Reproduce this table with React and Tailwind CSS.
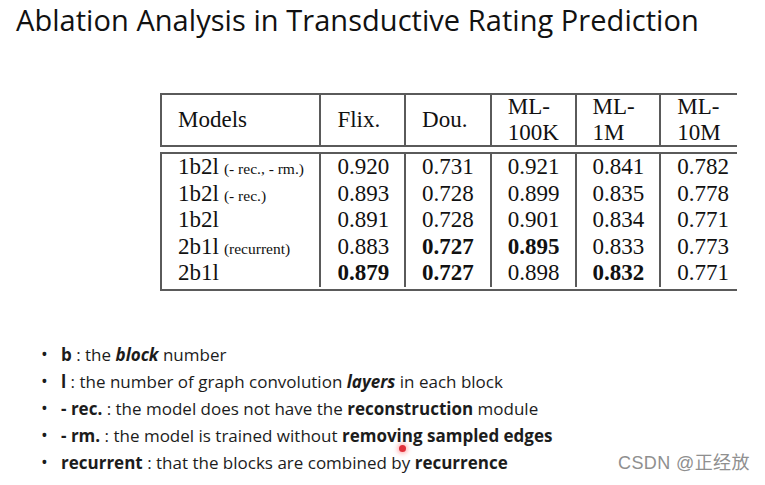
import React from 'react';

const cols = ['w-[160px]', 'w-[85px]', 'w-[86px]', 'w-[85px]', 'w-[85px]', 'w-[76px]'];

const rows = [
  { model: '1b2l', note: '(- rec., - rm.)', vals: ['0.920', '0.731', '0.921', '0.841', '0.782'], bold: [] },
  { model: '1b2l', note: '(- rec.)', vals: ['0.893', '0.728', '0.899', '0.835', '0.778'], bold: [] },
  { model: '1b2l', note: '', vals: ['0.891', '0.728', '0.901', '0.834', '0.771'], bold: [] },
  { model: '2b1l', note: '(recurrent)', vals: ['0.883', '0.727', '0.895', '0.833', '0.773'], bold: [1, 2] },
  { model: '2b1l', note: '', vals: ['0.879', '0.727', '0.898', '0.832', '0.771'], bold: [0, 1, 3] },
];

const headers = [['Models'], ['Flix.'], ['Dou.'], ['ML-', '100K'], ['ML-', '1M'], ['ML-', '10M']];

const Cell = ({ i, children, className = '' }) => (
  <div className={`${cols[i]} ${i < 5 ? 'border-r-2 border-[#5a5a5a]' : ''} pl-[16px] ${className}`}>
    {children}
  </div>
);

const bullets = [
  [<b key="a">b</b>, ' : the ', <b key="b"><i>block</i></b>, ' number'],
  [<b key="a">l</b>, ' : the number of graph convolution ', <b key="b"><i>layers</i></b>, ' in each block'],
  [<b key="a">- rec.</b>, ' : the model does not have the ', <b key="b">reconstruction</b>, ' module'],
  [<b key="a">- rm.</b>, ' : the model is trained without ', <b key="b">removing sampled edges</b>],
  [<b key="a">recurrent</b>, ' : that the blocks are combined by ', <b key="b">recurrence</b>],
];

export default function App() {
  return (
    <div className="relative w-[765px] h-[485px] bg-white overflow-hidden text-[#1a1a1a]">
      <h1 className="pl-[16px] text-[29px] leading-[40px] tracking-[0.05px] font-['Open_Sans',sans-serif] text-[#111]">
        Ablation Analysis in Transductive Rating Prediction
      </h1>

      <div className="ml-[160px] mt-[53px] w-[577px] font-['Liberation_Serif',serif] text-[23px] text-[#111]">
        <div className="flex h-[54px] border-t-2 border-b-2 border-l-2 border-[#5a5a5a]">
          {headers.map((h, i) => (
            <Cell key={i} i={i} className="flex flex-col justify-center leading-[26px]">
              {h.map((t) => (
                <span key={t}>{t}</span>
              ))}
            </Cell>
          ))}
        </div>
        <div className="mt-[5px] border-t-2 border-b-2 border-l-2 border-[#5a5a5a] pb-[2px]">
          {rows.map((r, ri) => (
            <div key={ri} className="flex h-[26.6px] leading-[26.6px]">
              <Cell i={0} className="whitespace-nowrap">
                {r.model}
                {r.note && <span className="text-[15.5px] ml-[5px]">{r.note}</span>}
              </Cell>
              {r.vals.map((v, vi) => (
                <Cell key={vi} i={vi + 1} className={r.bold.includes(vi) ? 'font-bold' : ''}>
                  {v}
                </Cell>
              ))}
            </div>
          ))}
        </div>
      </div>

      <ul className="mt-[50px] pl-[41px] font-['Open_Sans',sans-serif] text-[17px] text-[#1c1c1c]">
        {bullets.map((b, i) => (
          <li key={i} className="flex h-[27px] items-center">
            <span className="w-[20px] text-[18px] leading-[27px]">•</span>
            <span>{b}</span>
          </li>
        ))}
      </ul>

      <div className="absolute left-[618px] top-[450px] text-[18px] text-[#8f8f8f] font-['Liberation_Sans','Noto_Sans_CJK_SC',sans-serif] tracking-[0.4px]">
        CSDN @正经放
      </div>

      <div className="absolute left-[399px] top-[445px] w-[7px] h-[7px] rounded-full bg-[#e0303a] shadow-[0_0_4px_2px_rgba(255,60,60,0.35)]" />
    </div>
  );
}
